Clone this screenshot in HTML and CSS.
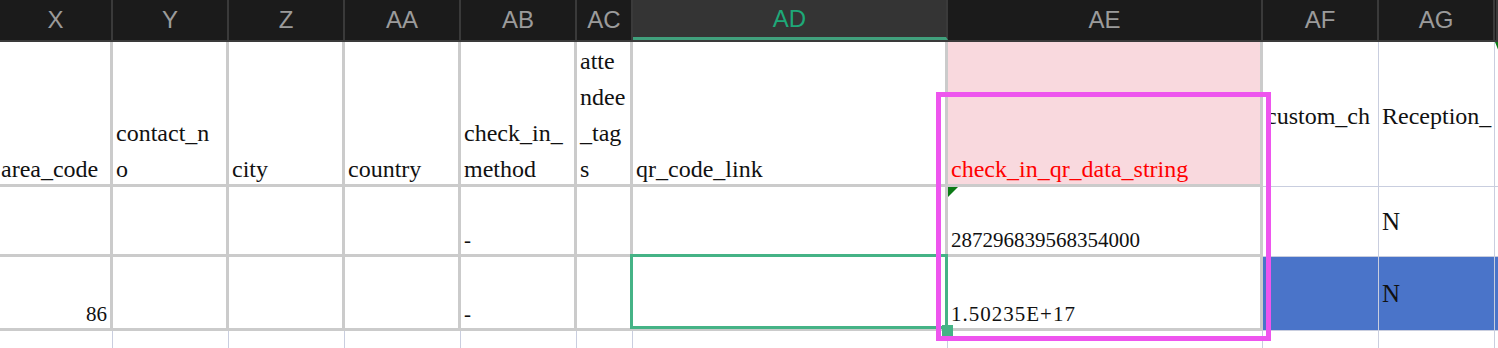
FILE: index.html
```html
<!DOCTYPE html>
<html lang="en">
<head>
    <meta charset="UTF-8">
    <meta name="viewport" content="width=device-width, initial-scale=1.0">
    <title>Sheet</title>
    <link rel="stylesheet" href="styles.css">
</head>
<body>
<div class="sheet">
    <div class="row letters">
        <div class="col">X</div>
        <div class="col">Y</div>
        <div class="col">Z</div>
        <div class="col">AA</div>
        <div class="col">AB</div>
        <div class="col">AC</div>
        <div class="col active">AD</div>
        <div class="col">AE</div>
        <div class="col">AF</div>
        <div class="col">AG</div>
        <div class="col"></div>
    </div>

    <div class="row head">
        <div class="cell first"><span class="txt">area_code</span></div>
        <div class="cell"><span class="txt">contact_n<br>o</span></div>
        <div class="cell"><span class="txt">city</span></div>
        <div class="cell"><span class="txt">country</span></div>
        <div class="cell"><span class="txt">check_in_<br>method</span></div>
        <div class="cell"><span class="txt">atte<br>ndee<br>_tag<br>s</span></div>
        <div class="cell"><span class="txt">qr_code_link</span></div>
        <div class="cell pink"><span class="txt red">check_in_qr_data_string</span></div>
        <div class="cell thin mid"><span class="clip">custom_ch</span></div>
        <div class="cell thin mid note"><span class="clip">Reception_</span></div>
        <div class="cell thin"></div>
    </div>

    <div class="row r2">
        <div class="cell"></div>
        <div class="cell"></div>
        <div class="cell"></div>
        <div class="cell"></div>
        <div class="cell"><span class="val">-</span></div>
        <div class="cell"></div>
        <div class="cell"></div>
        <div class="cell flag"><span class="val">287296839568354000</span></div>
        <div class="cell thin"></div>
        <div class="cell thin mid"><span class="val big">N</span></div>
        <div class="cell thin"></div>
    </div>

    <div class="row r3">
        <div class="cell right"><span class="val">86</span></div>
        <div class="cell"></div>
        <div class="cell"></div>
        <div class="cell"></div>
        <div class="cell"><span class="val">-</span></div>
        <div class="cell"></div>
        <div class="cell selected"></div>
        <div class="cell"><span class="val wide">1.50235E+17</span></div>
        <div class="cell thin blue"></div>
        <div class="cell thin blue mid"><span class="val big">N</span></div>
        <div class="cell thin blue"></div>
    </div>

    <div class="row empty">
        <div class="cell"></div>
        <div class="cell"></div>
        <div class="cell"></div>
        <div class="cell"></div>
        <div class="cell"></div>
        <div class="cell"></div>
        <div class="cell"></div>
        <div class="cell"></div>
        <div class="cell"></div>
        <div class="cell"></div>
        <div class="cell"></div>
    </div>

    <div class="mark"></div>
</div>
</body>
</html>
```

FILE: styles.css
```css
body{
    margin: 0;
    background: #ffffff;
    overflow: hidden;
}
.sheet{
    position: relative;
    width: 1498px;
    height: 348px;
    overflow: hidden;
}
.row{
    display: grid;
    grid-template-columns: 113px 116px 116px 116px 116px 56px 315px 315px 116px 116px 1fr;
}

/* column letters */
.letters{
    height: 42px;
    background: #1b1b1b;
    border-bottom: 2px solid #3a3a3a;
    box-sizing: border-box;
}
.col{
    border-right: 2px solid #3a3a3a;
    color: #9b9b9b;
    font-family: "Liberation Sans", Arial, sans-serif;
    font-size: 24px;
    line-height: 40px;
    text-align: center;
}
.col.active{
    background: #343434;
    color: #1ea878;
    border-bottom: 3px solid #40a07c;
    line-height: 37px;
}

/* cells */
.cell{
    box-sizing: border-box;
    border-right: 3px solid #cbcbcb;
    border-bottom: 3px solid #cbcbcb;
    display: flex;
    align-items: flex-end;
    padding: 0 2px 0 3px;
    overflow: hidden;
    position: relative;
    font-family: "Liberation Serif", "Times New Roman", serif;
    color: #111;
}
.cell.thin{
    border-right: 1px solid #c9cedf;
    border-bottom: 1px solid #c9cedf;
}
.head{ height: 145px; }
.r2{ height: 70px; }
.r3{ height: 74px; }
.empty{ height: 17px; }
.empty .cell{
    border-bottom: none;
    border-right: 1px solid #c9cedf;
}

.txt{
    font-size: 24px;
    line-height: 36px;
    margin-bottom: -3px;
    white-space: nowrap;
}
.first{ padding-left: 1px; }
.pink{ background: #f9d9de; }
.red{ color: #f00; }

.mid{ align-items: center; }
.clip{
    font-size: 24px;
    white-space: nowrap;
    margin-top: 4px;
}

.val{
    font-size: 21px;
    line-height: 24px;
    padding-bottom: 2px;
    white-space: nowrap;
}
.val.wide{ letter-spacing: 1px; }
.val.big{
    font-size: 25px;
    padding-bottom: 0;
}
.right{ justify-content: flex-end; padding-right: 3px; }

.blue{
    background: #4a74c9;
    border-right-color: #4a74c9;
    border-bottom-color: #4a74c9;
}

/* green comment flags */
.flag::before{
    content: "";
    position: absolute;
    left: 0;
    top: 0;
    border-top: 10px solid #0b7a16;
    border-right: 10px solid transparent;
}
.note{ overflow: visible; }
.note::after{
    content: "";
    position: absolute;
    right: -5px;
    top: 0;
    border-top: 10px solid #0b7a16;
    border-left: 4px solid transparent;
}

/* selected cell */
.selected{ overflow: visible; }
.selected::before{
    content: "";
    position: absolute;
    left: -3px;
    top: -3px;
    right: -3px;
    bottom: -1px;
    border: 3px solid #45b386;
}
.selected::after{
    content: "";
    position: absolute;
    right: -8px;
    bottom: -8px;
    width: 11px;
    height: 11px;
    background: #45b386;
    z-index: 2;
}

/* highlight box */
.mark{
    position: absolute;
    left: 936px;
    top: 92px;
    width: 335px;
    height: 249px;
    box-sizing: border-box;
    border: 5px solid #ee55ee;
    z-index: 3;
}
```
